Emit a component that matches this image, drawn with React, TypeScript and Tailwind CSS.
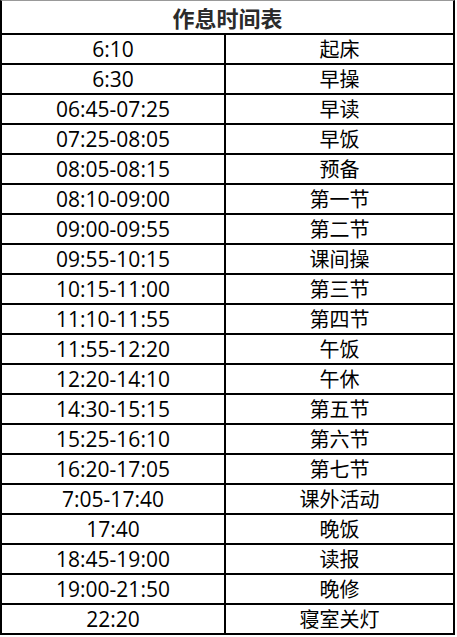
const schedule = [
  ["6:10", "起床"],
  ["6:30", "早操"],
  ["06:45-07:25", "早读"],
  ["07:25-08:05", "早饭"],
  ["08:05-08:15", "预备"],
  ["08:10-09:00", "第一节"],
  ["09:00-09:55", "第二节"],
  ["09:55-10:15", "课间操"],
  ["10:15-11:00", "第三节"],
  ["11:10-11:55", "第四节"],
  ["11:55-12:20", "午饭"],
  ["12:20-14:10", "午休"],
  ["14:30-15:15", "第五节"],
  ["15:25-16:10", "第六节"],
  ["16:20-17:05", "第七节"],
  ["7:05-17:40", "课外活动"],
  ["17:40", "晚饭"],
  ["18:45-19:00", "读报"],
  ["19:00-21:50", "晚修"],
  ["22:20", "寝室关灯"],
];

export default function App() {
  return (
    <div className="w-[457px] h-[637px] bg-white overflow-hidden font-['Noto_Sans_CJK_SC','Noto_Sans',sans-serif] text-black">
      <div className="w-[455px] border-l-2 border-r-2 border-t border-l-black border-r-black border-t-[#999]">
        <div className="h-[34px] flex items-center justify-center border-b-2 border-black text-[22px] font-bold text-[#2b2b2b] leading-none">
          作息时间表
        </div>
        {schedule.map(([time, item]) => (
          <div key={time + item} className="grid grid-cols-[224px_1fr] h-[30px] border-b-2 border-black">
            <div className="flex items-center justify-center border-r-2 border-black font-['Open_Sans','Noto_Sans_CJK_SC',sans-serif] text-[21px] leading-none">
              {time}
            </div>
            <div className="flex items-center justify-center text-[20px] leading-none">
              {item}
            </div>
          </div>
        ))}
      </div>
    </div>
  );
}
